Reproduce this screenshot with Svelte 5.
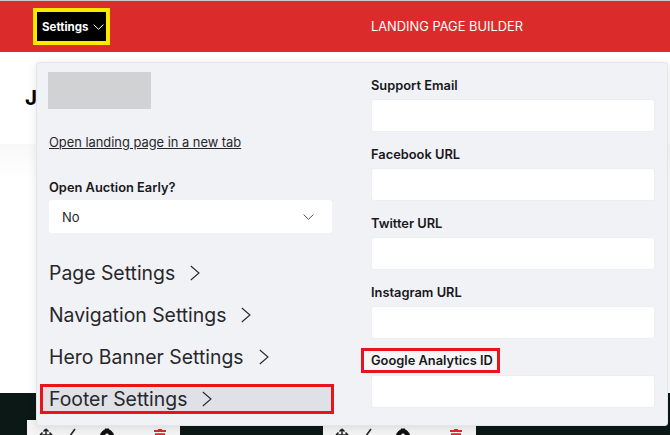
<script>
  const rightFields = [
    { label: 'Support Email' },
    { label: 'Facebook URL' },
    { label: 'Twitter URL' },
    { label: 'Instagram URL' },
    { label: 'Google Analytics ID', marked: true }
  ];
  const sections = [
    { label: 'Page Settings' },
    { label: 'Navigation Settings' },
    { label: 'Hero Banner Settings' },
    { label: 'Footer Settings', marked: true }
  ];
  const cards = ['first', 'second'];
</script>

<div class="page">
  <header class="bar">
    <button class="settings">Settings
      <svg width="11" height="6" viewBox="0 0 11 6"><path d="M.6.6l4.9 4.7L10.4.6" fill="none" stroke="#fff" stroke-width="1"/></svg>
    </button>
    <div class="bar-title">LANDING PAGE BUILDER</div>
  </header>

  <div class="title-row"><h1>J</h1></div>

  <div class="canvas">
    <div class="strip">
      {#each cards as c}
        <div class="tools {c}">
          <svg class="tool move" width="14" height="14" viewBox="0 0 14 14"><path d="M7 1v12M1 7h12M7 1L4.5 3.5M7 1l2.5 2.5M1 7l2.5-2.5M13 7l-2.5-2.5" fill="none" stroke="#222" stroke-width="1.5"/></svg>
          <svg class="tool edit" width="14" height="14" viewBox="0 0 14 14"><path d="M2 12L10 1" fill="none" stroke="#222" stroke-width="1.6"/></svg>
          <svg class="tool gear" width="14" height="14" viewBox="0 0 14 14"><circle cx="7" cy="7.5" r="4.2" fill="none" stroke="#111" stroke-width="4.6"/><path d="M5 .5h4v3H5zM.5 5l3-1v3h-3zM13.5 5l-3-1v3h3z" fill="#111"/></svg>
          <svg class="tool trash" width="14" height="14" viewBox="0 0 14 14"><path d="M5 1h4v1h4v2H1V2h4zM2 5.2h10V14H2z" fill="#dc2b2b"/></svg>
        </div>
      {/each}
    </div>
  </div>

  <div class="panel">
    <div class="col left">
      <div class="thumb"></div>
      <a class="open" href="#top">Open landing page in a new tab</a>
      <div class="label early">Open Auction Early?</div>
      <div class="select">No
        <svg width="11" height="6" viewBox="0 0 11 6"><path d="M.6.6l4.9 4.7L10.4.6" fill="none" stroke="#555" stroke-width="1"/></svg>
      </div>
      <div class="sections">
        {#each sections as s}
          <div class="section" class:marked={s.marked}>
            <span>{s.label}</span>
            <svg width="10" height="16" viewBox="0 0 10 16"><path d="M.8 1L9 8 .8 15" fill="none" stroke="#27272a" stroke-width="1.1"/></svg>
          </div>
        {/each}
      </div>
    </div>
    <div class="col right-col">
      {#each rightFields as f}
        <div class="field">
          <div class="label" class:marked={f.marked}>{f.label}</div>
          <div class="input"></div>
        </div>
      {/each}
    </div>
  </div>
</div>

<style>
  :global(body) { margin: 0; background: #fff; }
  .page {
    position: relative;
    width: 670px;
    height: 435px;
    overflow: hidden;
    font-family: Inter, "Liberation Sans", sans-serif;
    color: #18181b;
    background: #fff;
  }
  .bar {
    height: 52px;
    border-top: 1px solid #c9c9c9;
    box-sizing: border-box;
    background: #dc2b2b;
    display: flex;
    align-items: center;
    padding: 0 0 0 33px;
  }
  .settings {
    width: 77px;
    height: 37px;
    box-sizing: border-box;
    border: 4px solid #fde800;
    background: #000;
    color: #fff;
    font: 700 11.5px Inter, "Liberation Sans", sans-serif;
    display: flex;
    align-items: center;
    gap: 5px;
    padding: 0 0 0 5px;
    white-space: nowrap;
  }
  .bar-title {
    margin-left: 261px;
    color: #fff;
    font-size: 12.85px;
  }
  .title-row {
    height: 92px;
    display: flex;
    align-items: center;
    padding-left: 25px;
    box-sizing: border-box;
  }
  h1 { margin: 0 0 2px; font-size: 20.5px; font-weight: 700; color: #000; }
  .canvas {
    height: 291px;
    background: linear-gradient(#f8f8f8, #fff 36px);
    display: flex;
    flex-direction: column;
    justify-content: flex-end;
  }
  .strip { height: 42px; background: #0c1815; display: flex; align-items: flex-end; padding-left: 27px; gap: 143px; }
  .tools {
    position: relative;
    width: 153px;
    height: 15px;
    background: #f4f4f5;
    flex: none;
    overflow: hidden;
  }
  .tool { position: absolute; top: 8px; }
  .move { left: 12px; }
  .edit { left: 38px; }
  .gear { left: 73px; }
  .trash { left: 126px; }
  .panel {
    position: absolute;
    left: 36px;
    top: 62px;
    width: 632px;
    height: 364px;
    box-sizing: border-box;
    background: #f1f2f6;
    border: 1px solid #e3e5ea;
    border-radius: 3px;
    box-shadow: 0 2px 10px rgba(0,0,0,.1);
    display: flex;
    padding: 9px 12px 0 12px;
  }
  .col.left { width: 284px; }
  .right-col { margin-left: 38px; width: 284px; padding-top: 6px; }
  .thumb { width: 103px; height: 37px; margin-left: -1px; background: #d1d2d4; }
  .open {
    display: block;
    margin-top: 25px;
    font-size: 12.87px;
    line-height: 18px;
    color: #27272a;
    text-decoration: underline;
  }
  .label { font-size: 12.85px; font-weight: 600; line-height: 16px; color: #18181b; }
  .early { margin-top: 28px; }
  .select {
    margin-top: 4px;
    width: 283px;
    height: 33px;
    background: #fff;
    border-radius: 3px;
    box-sizing: border-box;
    padding: 0 18px 0 13px;
    display: flex;
    align-items: center;
    justify-content: space-between;
    font-size: 13px;
    color: #27272a;
  }
  .sections { margin-top: 19px; margin-left: -9px; }
  .section {
    height: 42px;
    display: flex;
    align-items: center;
    gap: 15px;
    padding-left: 9px;
    font-size: 19.4px;
    color: #27272a;
    box-sizing: border-box;
  }
  .section.marked {
    height: 30px;
    margin-top: 6px;
    width: 294px;
    border: 3px solid #e8141c;
    background: #dfe1e6;
    padding-left: 6px;
  }
  .field { height: 69px; }
  .input {
    margin-top: 5px;
    width: 284px;
    height: 33px;
    background: #fff;
    border-radius: 3px;
    border: 1px solid #eceef2;
    box-sizing: border-box;
  }
  .label.marked {
    width: fit-content;
    border: 3px solid #e8141c;
    background: #f6f6f8;
    padding: 2px 4px 1px 7px;
    margin: -6px 0 0 -10px;
    white-space: nowrap;
  }
  .label.marked + .input { margin-top: 2px; }
</style>
